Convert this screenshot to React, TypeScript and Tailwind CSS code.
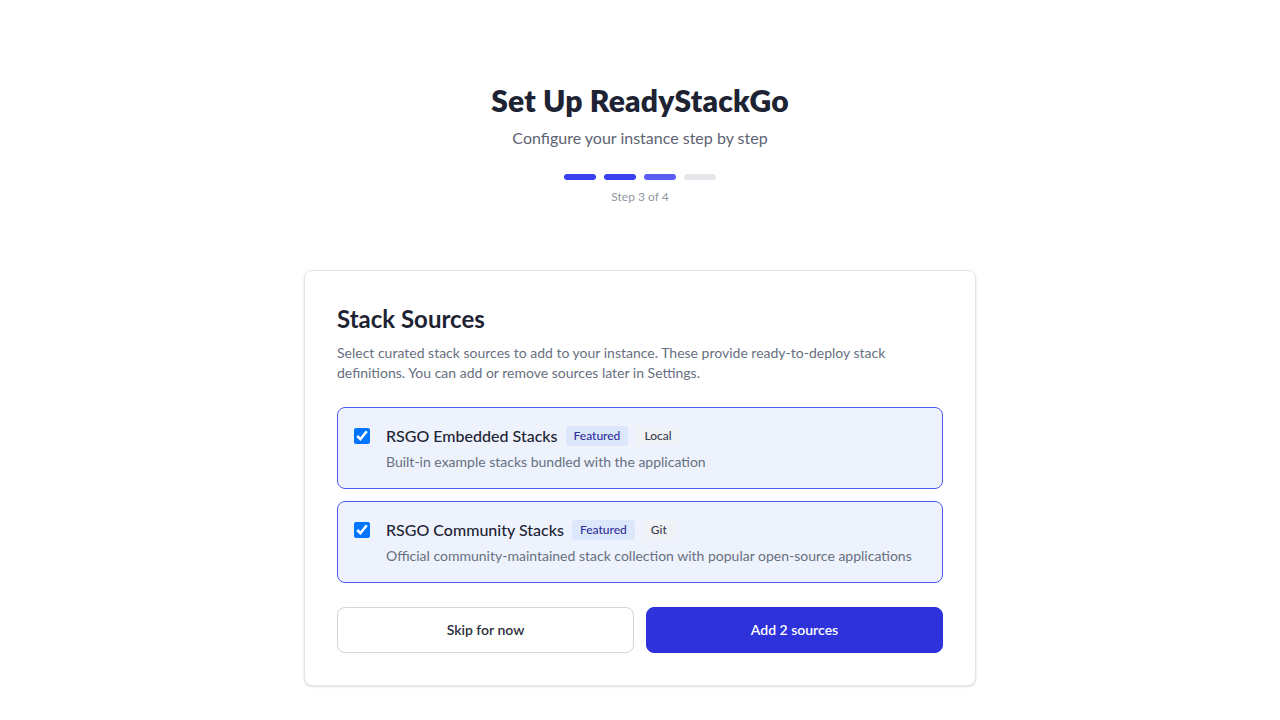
import { useState } from 'react';

type Source = {
  id: string;
  name: string;
  kind: string;
  description: string;
};

const sources: Source[] = [
  {
    id: 'embedded',
    name: 'RSGO Embedded Stacks',
    kind: 'Local',
    description: 'Built-in example stacks bundled with the application',
  },
  {
    id: 'community',
    name: 'RSGO Community Stacks',
    kind: 'Git',
    description: 'Official community-maintained stack collection with popular open-source applications',
  },
];

const StepBars = () => {
  return (
    <div className="mt-6 flex flex-col items-center">
      <div className="flex gap-2">
        <div className="h-1.5 w-8 rounded-full bg-[#3a3ff0]" />
        <div className="h-1.5 w-8 rounded-full bg-[#3a3ff0]" />
        <div className="h-1.5 w-8 rounded-full bg-[#5a5ef2]" />
        <div className="h-1.5 w-8 rounded-full bg-[#e5e7eb]" />
      </div>
      <p className="mt-[9px] text-xs leading-4 text-[#9096a3]">Step 3 of 4</p>
    </div>
  );
};

const SourceRow = ({
  source,
  checked,
  onToggle,
}: {
  source: Source;
  checked: boolean;
  onToggle: () => void;
}) => {
  return (
    <label
      className={
        checked
          ? 'flex cursor-pointer items-start gap-4 rounded-lg border border-[#4d5cf0] bg-[#edf2fd] p-4'
          : 'flex cursor-pointer items-start gap-4 rounded-lg border border-gray-200 bg-white p-4'
      }
    >
      <input
        type="checkbox"
        checked={checked}
        onChange={onToggle}
        className="mt-1 h-4 w-4 shrink-0 accent-[#0075ff]"
      />
      <div className="flex flex-col gap-1">
        <div className="flex items-center gap-2">
          <span className="text-base leading-6 font-medium text-[#1d2333]">{source.name}</span>
          <span className="rounded bg-[#dde7fb] px-2 py-0.5 text-xs leading-4 font-medium text-[#2f2f9a]">
            Featured
          </span>
          <span className="rounded bg-[#f1f2f5] px-2 py-0.5 text-xs leading-4 font-medium text-[#3a3f4c]">
            {source.kind}
          </span>
        </div>
        <p className="text-sm leading-5 text-[#677080]">{source.description}</p>
      </div>
    </label>
  );
};

export default function App() {
  const [selected, setSelected] = useState<string[]>(['embedded', 'community']);

  const toggle = (id: string) => {
    setSelected((prev) => (prev.includes(id) ? prev.filter((s) => s !== id) : [...prev, id]));
  };

  return (
    <div className="min-h-screen bg-white pt-[82px] pb-10 font-['Lato','Open_Sans',sans-serif]">
      <div className="flex flex-col items-center">
        <h1 className="text-3xl leading-9 font-extrabold tracking-[0.2px] text-[#1d2333]">Set Up ReadyStackGo</h1>
        <p className="mt-2 text-base leading-6 text-[#5d6372]">Configure your instance step by step</p>
        <StepBars />
      </div>

      <div className="mx-auto mt-[65px] w-[672px] rounded-lg border border-[#e3e5ea] bg-white p-8 shadow-sm">
        <h2 className="text-2xl leading-8 font-bold text-[#1d2333]">Stack Sources</h2>
        <p className="mt-2 text-sm leading-5 text-[#677080]">
          Select curated stack sources to add to your instance. These provide ready-to-deploy stack
          definitions. You can add or remove sources later in Settings.
        </p>

        <div className="mt-6 flex flex-col gap-3">
          {sources.map((source) => (
            <SourceRow
              key={source.id}
              source={source}
              checked={selected.includes(source.id)}
              onToggle={() => toggle(source.id)}
            />
          ))}
        </div>

        <div className="mt-6 flex gap-3">
          <button className="flex-1 rounded-lg border border-[#d2d5dc] bg-white py-3 text-sm leading-5 font-semibold text-[#2b303c]">
            Skip for now
          </button>
          <button className="flex-1 rounded-lg border border-[#2d32db] bg-[#2d32db] py-3 text-sm leading-5 font-semibold text-white">
            Add {selected.length} sources
          </button>
        </div>
      </div>
    </div>
  );
}
